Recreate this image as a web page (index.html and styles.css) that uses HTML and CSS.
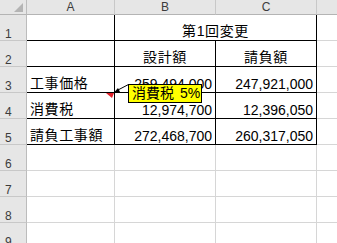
FILE: index.html
```html
<!DOCTYPE html>
<html lang="ja">
<head>
<meta charset="utf-8">
<link rel="stylesheet" href="styles.css">
</head>
<body>
<div class="sheet">
  <div class="grid">
    <div class="corner"><svg width="27" height="15" viewBox="0 0 27 15"><polygon points="23,3 23,12 14,12" fill="#b4b4b4"/></svg></div>
    <div class="ch">A</div>
    <div class="ch">B</div>
    <div class="ch">C</div>
    <div class="ch"></div>

    <div class="rh">1</div>
    <div class="c bk"></div>
    <div class="c bk span2 t center">第1回変更</div>
    <div class="c"></div>

    <div class="rh">2</div>
    <div class="c bk"></div>
    <div class="c bk t center">設計額</div>
    <div class="c bk t center">請負額</div>
    <div class="c"></div>

    <div class="rh">3</div>
    <div class="c bk t">工事価格</div>
    <div class="c bk n">259,494,000</div>
    <div class="c bk n">247,921,000</div>
    <div class="c"></div>

    <div class="rh">4</div>
    <div class="c bk t">消費税</div>
    <div class="c bk n">12,974,700</div>
    <div class="c bk n">12,396,050</div>
    <div class="c"></div>

    <div class="rh">5</div>
    <div class="c bk t">請負工事額</div>
    <div class="c bk n">272,468,700</div>
    <div class="c bk n">260,317,050</div>
    <div class="c"></div>

    <div class="rh">6</div>
    <div class="c"></div><div class="c"></div><div class="c"></div><div class="c"></div>
    <div class="rh">7</div>
    <div class="c"></div><div class="c"></div><div class="c"></div><div class="c"></div>
    <div class="rh">8</div>
    <div class="c"></div><div class="c"></div><div class="c"></div><div class="c"></div>
    <div class="rh">9</div>
    <div class="c"></div><div class="c"></div><div class="c"></div><div class="c"></div>
  </div>

  <svg class="marks" width="337" height="243" viewBox="0 0 337 243">
    <polygon points="106,93 114,93 112,98" fill="#e0202a"/>
    <line x1="128.5" y1="84.5" x2="117" y2="90.5" stroke="#000" stroke-width="1"/>
    <polygon points="113.5,93 118,88 120,92" fill="#000"/>
  </svg>
  <div class="note">消費税 5%</div>
</div>
</body>
</html>
```

FILE: styles.css
```css
html, body {
  margin: 0;
  padding: 0;
  background: #ffffff;
}

.sheet {
  position: relative;
  width: 337px;
  height: 243px;
  overflow: hidden;
  font-family: "Liberation Sans", "Noto Sans CJK JP", sans-serif;
}

.grid {
  display: grid;
  grid-template-columns: 27px 88px 101px 101px 40px;
  grid-template-rows: 15px repeat(9, 26px);
}

.grid > div {
  box-sizing: border-box;
}

.corner {
  background: #e6e6e6;
  border-right: 1px solid #bcbcbc;
  border-bottom: 1px solid #b4b4b4;
  line-height: 0;
}

.ch {
  background: #e6e6e6;
  border-right: 1px solid #c8c8c8;
  border-bottom: 1px solid #b4b4b4;
  font-size: 12px;
  line-height: 14px;
  color: #3c3c3c;
  text-align: center;
}

.rh {
  background: #e6e6e6;
  border-right: 1px solid #bcbcbc;
  border-bottom: 1px solid #c8c8c8;
  font-size: 12px;
  line-height: 12px;
  color: #3c3c3c;
  padding-left: 5px;
  display: flex;
  align-items: flex-end;
}

.c {
  border-right: 1px solid #d6d6d6;
  border-bottom: 1px solid #d6d6d6;
  display: flex;
  align-items: flex-end;
  color: #000;
  white-space: nowrap;
}

.c.bk {
  border-right-color: #000;
  border-bottom-color: #000;
}

.span2 {
  grid-column: span 2;
}

.t {
  font-size: 14px;
  letter-spacing: 0.6px;
  line-height: 15px;
  padding-left: 3px;
  padding-bottom: 1px;
}

.center {
  justify-content: center;
  padding-left: 0;
}

.n {
  font-size: 14px;
  line-height: 15px;
  justify-content: flex-end;
  padding-right: 3px;
}

.marks {
  position: absolute;
  left: 0;
  top: 0;
  pointer-events: none;
}

.note {
  position: absolute;
  left: 128px;
  top: 84px;
  width: 74px;
  height: 19px;
  box-sizing: border-box;
  border: 1px solid #000;
  background: #ffff00;
  font-size: 14px;
  line-height: 17px;
  padding-left: 3px;
  word-spacing: 2px;
  color: #000;
  white-space: nowrap;
}
```
